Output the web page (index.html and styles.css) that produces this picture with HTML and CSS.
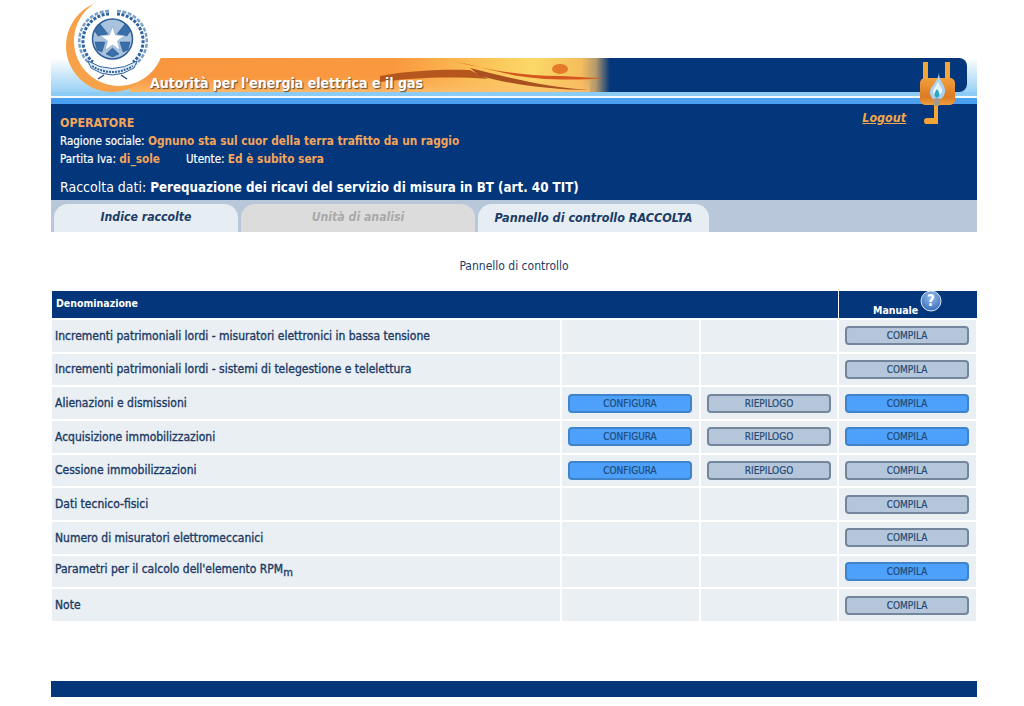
FILE: index.html
```html
<!DOCTYPE html>
<html lang="it">
<head>
    <meta charset="UTF-8">
    <meta name="viewport" content="width=device-width, initial-scale=1.0">
    <title>Pannello di controllo</title>
    <link rel="stylesheet" href="styles.css">
</head>
<body>
<div class="page">
    <div class="masthead">
        <svg class="banner" width="926" height="104" viewBox="51 0 926 104">
            <defs>
                <linearGradient id="sky" x1="0" y1="0" x2="0" y2="1">
                    <stop offset="0" stop-color="#ffffff"/>
                    <stop offset="1" stop-color="#8ccbf4"/>
                </linearGradient>
                <linearGradient id="sun" x1="0" y1="0" x2="1" y2="0">
                    <stop offset="0" stop-color="#f8973f"/>
                    <stop offset="0.55" stop-color="#f9983f"/>
                    <stop offset="0.68" stop-color="#fbb64f"/>
                    <stop offset="0.84" stop-color="#fbd968"/>
                    <stop offset="0.94" stop-color="#f5bd5c"/>
                    <stop offset="0.97" stop-color="#b59a6c"/>
                    <stop offset="1" stop-color="#03367a"/>
                </linearGradient>
                <linearGradient id="fade" x1="0" y1="0" x2="0" y2="1">
                    <stop offset="0" stop-color="#fbb460" stop-opacity="0"/>
                    <stop offset="1" stop-color="#fcc070" stop-opacity="0.8"/>
                </linearGradient>
            </defs>
            <rect x="51" y="58" width="926" height="38" fill="url(#sky)"/>
            <rect x="300" y="58" width="667" height="34" rx="8" fill="#03367a"/>
            <rect x="130" y="58" width="480" height="34" fill="url(#sun)"/>
            <rect x="130" y="76" width="460" height="16" fill="url(#fade)"/>
            <path d="M448 60 C490 70 520 76 560 76 C580 77 595 78 604 78 C570 81 530 80 500 72 C480 67 462 63 448 60Z" fill="#d4581e"/>
            <path d="M380 76 C410 70 450 69 470 70 L488 79 C450 76 410 78 380 82Z" fill="#b5561f"/>
            <path d="M470 68 C510 78 550 88 590 90 C550 90 510 84 480 76Z" fill="#a8501f"/>
            <ellipse cx="560" cy="69" rx="8" ry="5" fill="#e67a2c"/>
            <rect x="51" y="92" width="926" height="4" fill="#8ccbf4"/>
            <rect x="51" y="96" width="926" height="2" fill="#f4fbff"/>
            <rect x="51" y="98" width="926" height="6" fill="#4a9ff0"/>
            <circle cx="112" cy="46" r="46" fill="#f7a24a"/>
            <circle cx="119" cy="41" r="45" fill="#ffffff"/>
            <!-- emblem -->
            <g fill="none">
                <path d="M109 11 A30 30 0 0 0 90 64" stroke="#7ba0c8" stroke-width="2.500" stroke-dasharray="4 1.500"/>
                <path d="M117 11 A30 30 0 0 1 136 64" stroke="#7ba0c8" stroke-width="2.500" stroke-dasharray="4 1.500"/>
                <path d="M109 14 A27 27 0 0 0 93 62" stroke="#2f649f" stroke-width="3" stroke-dasharray="3 1.500"/>
                <path d="M117 14 A27 27 0 0 1 133 62" stroke="#2f649f" stroke-width="3" stroke-dasharray="3 1.500"/>
            </g>
            <circle cx="112.500" cy="39" r="20" fill="#a9c3df" stroke="#2c5e98" stroke-width="1.500"/>
            <g fill="#3a6ea8" stroke="#25528a" stroke-width="0.500">
                <path d="M100 24 L108 34 L98 36 L94 30Z"/>
                <path d="M125 24 L117 34 L127 36 L131 30Z"/>
                <path d="M95 42 L105 42 L102 52 L97 50Z"/>
                <path d="M130 42 L120 42 L123 52 L128 50Z"/>
                <path d="M106 54 L112.500 48 L119 54 L112.500 57Z"/>
            </g>
            <path d="M112.500 26 L115.500 35 L125 35.500 L117.500 41 L120 50.500 L112.500 45 L105 50.500 L107.500 41 L100 35.500 L109.500 35Z" fill="#ffffff" stroke="#6f97c0" stroke-width="0.500"/>
            <path d="M88 61 Q112 76 137 61 L134 68 Q112 82 91 68Z" fill="#e4ecf4" stroke="#2f649f" stroke-width="1"/>
            <path d="M92 66 Q112 78 133 66" fill="none" stroke="#2f649f" stroke-width="2" stroke-dasharray="2 1"/>
            <path d="M104 75 L98 79 M121 75 L127 79" stroke="#26507f" stroke-width="1.500"/>
        </svg>
        <span class="banner-title">Autorità per l'energia elettrica e il gas</span>
        <svg class="plug" width="38" height="68" viewBox="0 0 38 68">
            <defs>
                <linearGradient id="plugbody" x1="0" y1="0" x2="0" y2="1">
                    <stop offset="0" stop-color="#f3a03a"/>
                    <stop offset="0.7" stop-color="#dc7a25"/>
                    <stop offset="1" stop-color="#f0a040"/>
                </linearGradient>
            </defs>
            <rect x="4" y="2" width="5" height="18" fill="#f3a535"/>
            <rect x="26" y="2" width="5" height="18" fill="#f3a535"/>
            <rect x="1" y="18" width="35" height="27" rx="5" fill="url(#plugbody)"/>
            <path d="M15 58 V44 H19 V64 H7 Q5 64 5 61 Q5 58 8 58Z" fill="#f3a535"/>
            <path d="M20 13 C20 22 27 25 26 32 C25 38 21 40 18 40 C14 40 11 37 11 32 C11 26 18 24 20 13Z" fill="#a9d2f4"/>
            <path d="M19 21 C20 26 24 28 23 32 C22 36 14 36 14 32 C14 28 18 26 19 21Z" fill="#e8f4fc"/>
            <path d="M18 29 C20 32 21 34 20 36 C19 38 17 38 16 36 C15 34 16 32 18 29Z" fill="#27a8c0"/>
            <rect x="15" y="38" width="6" height="8" rx="2" fill="#a89a8a"/>
        </svg>
        <div class="operator">
            <div class="operator-info">
                <div class="op-title">OPERATORE</div>
                <div class="op-line">Ragione sociale: <b>Ognuno sta sul cuor della terra trafitto da un raggio</b></div>
                <div class="op-line">Partita Iva: <b class="op-piva">di_sole</b>Utente: <b>Ed è subito sera</b></div>
                <div class="op-raccolta">Raccolta dati: <b>Perequazione dei ricavi del servizio di misura in BT (art. 40 TIT)</b></div>
            </div>
            <a class="logout" href="#">Logout</a>
        </div>
    </div>

    <div class="tabs">
        <a class="tab tab-first" href="#">Indice raccolte</a>
        <a class="tab tab-off" href="#">Unità di analisi</a>
        <a class="tab tab-last" href="#">Pannello di controllo RACCOLTA</a>
    </div>

    <p class="caption">Pannello di controllo</p>

    <div class="table-head">
        <div class="th-name">Denominazione</div>
        <div class="th-manual">Manuale
            <svg class="help" width="22" height="22" viewBox="0 0 22 22">
                <defs>
                    <radialGradient id="ball" cx="0.5" cy="0.3" r="0.8">
                        <stop offset="0" stop-color="#94bcec"/>
                        <stop offset="1" stop-color="#2a64b4"/>
                    </radialGradient>
                </defs>
                <circle cx="11" cy="11" r="10" fill="url(#ball)" stroke="#dfe9f5" stroke-width="1"/>
                <text x="11" y="16" text-anchor="middle" class="help-mark">?</text>
            </svg>
        </div>
    </div>

    <div class="grid">
        <div class="cell cell-name">Incrementi patrimoniali lordi - misuratori elettronici in bassa tensione</div>
        <div class="cell"></div>
        <div class="cell"></div>
        <div class="cell"><a class="btn" href="#">COMPILA</a></div>

        <div class="cell cell-name">Incrementi patrimoniali lordi - sistemi di telegestione e telelettura</div>
        <div class="cell"></div>
        <div class="cell"></div>
        <div class="cell"><a class="btn" href="#">COMPILA</a></div>

        <div class="cell cell-name">Alienazioni e dismissioni</div>
        <div class="cell"><a class="btn btn-on" href="#">CONFIGURA</a></div>
        <div class="cell"><a class="btn" href="#">RIEPILOGO</a></div>
        <div class="cell"><a class="btn btn-on" href="#">COMPILA</a></div>

        <div class="cell cell-name">Acquisizione immobilizzazioni</div>
        <div class="cell"><a class="btn btn-on" href="#">CONFIGURA</a></div>
        <div class="cell"><a class="btn" href="#">RIEPILOGO</a></div>
        <div class="cell"><a class="btn btn-on" href="#">COMPILA</a></div>

        <div class="cell cell-name">Cessione immobilizzazioni</div>
        <div class="cell"><a class="btn btn-on" href="#">CONFIGURA</a></div>
        <div class="cell"><a class="btn" href="#">RIEPILOGO</a></div>
        <div class="cell"><a class="btn" href="#">COMPILA</a></div>

        <div class="cell cell-name">Dati tecnico-fisici</div>
        <div class="cell"></div>
        <div class="cell"></div>
        <div class="cell"><a class="btn" href="#">COMPILA</a></div>

        <div class="cell cell-name">Numero di misuratori elettromeccanici</div>
        <div class="cell"></div>
        <div class="cell"></div>
        <div class="cell"><a class="btn" href="#">COMPILA</a></div>

        <div class="cell cell-name"><span class="cell-sub">Parametri per il calcolo dell'elemento RPM<sub>m</sub></span></div>
        <div class="cell"></div>
        <div class="cell"></div>
        <div class="cell"><a class="btn btn-on" href="#">COMPILA</a></div>

        <div class="cell cell-name">Note</div>
        <div class="cell"></div>
        <div class="cell"></div>
        <div class="cell"><a class="btn" href="#">COMPILA</a></div>
    </div>

    <div class="footer"></div>
</div>
</body>
</html>
```

FILE: styles.css
```css
html, body {
    margin: 0;
    padding: 0;
    background-color: white;
}
body {
    font-family: "DejaVu Sans", Verdana, sans-serif;
    font-stretch: condensed;
    font-size: 12px;
    color: #1c3c66;
}
.page {
    width: 926px;
    margin-left: 51px;
}
.masthead {
    position: relative;
}
.banner {
    display: block;
}
.banner-title {
    position: absolute;
    left: 99px;
    top: 75px;
    font-size: 14px;
    font-weight: bold;
    color: white;
    text-shadow: 1px 1px 1px #5a4a3a;
    white-space: nowrap;
}
.plug {
    position: absolute;
    left: 868px;
    top: 60px;
}
.operator {
    background-color: #03367a;
    height: 96px;
    display: flex;
    justify-content: space-between;
    color: white;
    box-sizing: border-box;
    padding: 12px 0 0 9px;
}
.op-title {
    color: #f5a55a;
    font-weight: bold;
    font-size: 12.3px;
    line-height: 14px;
}
.op-line {
    font-size: 11.5px;
    line-height: 17.5px;
    -webkit-text-stroke: 0.2px white;
}
.op-line:nth-child(2) {
    margin-top: 3px;
}
.op-line b {
    color: #f5a55a;
    font-size: 11.75px;
    -webkit-text-stroke: 0;
}
.op-piva {
    margin-right: 26px;
}
.op-raccolta {
    font-size: 14px;
    line-height: 18px;
    margin-top: 10px;
}
.op-raccolta b {
    font-size: 13.25px;
}
.logout {
    color: #f0a848;
    font-size: 12.4px;
    font-weight: bold;
    font-style: italic;
    margin: -6px 71px 0 0;
    line-height: 16px;
    height: 16px;
}
.tabs {
    background-color: #b8c8da;
    height: 32px;
    display: flex;
    gap: 3px;
    padding: 4px 0 0 3px;
    box-sizing: border-box;
}
.tab {
    background-color: #e6edf3;
    color: #1c3c66;
    border-radius: 14px 14px 0 0;
    font-weight: bold;
    font-style: italic;
    font-size: 12.2px;
    padding-bottom: 2px;
    box-sizing: border-box;
    text-decoration: none;
    display: flex;
    align-items: center;
    justify-content: center;
}
.tab-first {
    width: 184px;
}
.tab-off {
    width: 234px;
    background-color: #dcdcdc;
    color: #a9a9a9;
}
.tab-last {
    width: 231px;
    font-size: 12.5px;
}
.caption {
    margin: 27px 0 0;
    text-align: center;
    font-size: 12px;
    line-height: 14px;
    height: 32px;
}
.table-head {
    display: flex;
    gap: 1px;
    margin-left: 1px;
    height: 27px;
    color: white;
    font-weight: bold;
    font-size: 10.5px;
}
.th-name {
    width: 786px;
    background-color: #03367a;
    display: flex;
    align-items: center;
    padding: 0 0 3px 4px;
    box-sizing: border-box;
}
.th-manual {
    position: relative;
    width: 138px;
    background-color: #03367a;
    box-sizing: border-box;
    padding: 12px 0 0 34px;
    line-height: 14px;
}
.help {
    position: absolute;
    left: 81px;
    top: -1px;
}
.help-mark {
    fill: white;
    font-size: 15px;
    font-weight: bold;
}
.grid {
    display: grid;
    grid-template-columns: 508px 137px 136px 137px;
    grid-auto-rows: 31.67px;
    gap: 2px;
    margin: 2px 0 0 1px;
}
.cell {
    background-color: #eaeff4;
    display: flex;
    align-items: center;
    padding-left: 6px;
}
.cell-name {
    padding-left: 3px;
    -webkit-text-stroke: 0.35px #1c3c66;
}
.cell-sub {
    margin-bottom: 5px;
}
sub {
    font-size: 11px;
    line-height: 0;
}
.btn {
    width: 124px;
    height: 19px;
    box-sizing: border-box;
    border: 2px solid #73869c;
    border-radius: 4px;
    background-color: #b5c6da;
    color: #1f4a75;
    font-size: 10px;
    line-height: 15px;
    text-align: center;
    text-decoration: none;
    -webkit-text-stroke: 0.2px #1f4a75;
}
.btn-on {
    background-color: #4ea1fb;
    border-color: #3f83cc;
}
.footer {
    height: 16px;
    margin-top: 60px;
    background-color: #03367a;
}
```
